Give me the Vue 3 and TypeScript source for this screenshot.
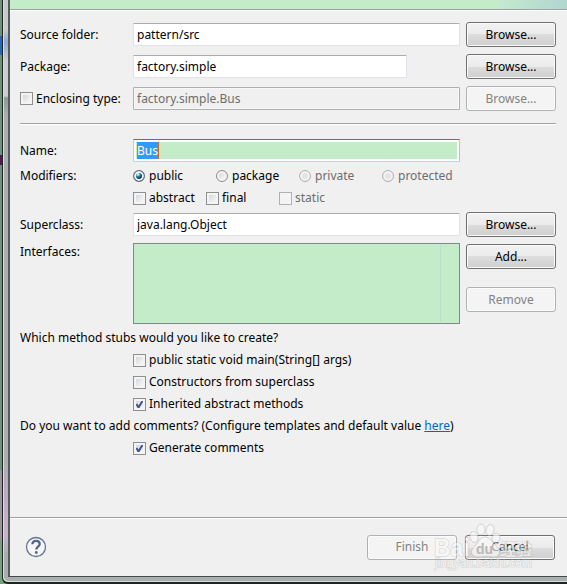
<script setup lang="ts">
import { onMounted, ref } from 'vue'

interface Option {
  id: string
  label: string
  disabled?: boolean
  checked?: boolean
}

const sourceFolder = ref('pattern/src')
const packageName = ref('factory.simple')
const enclosingType = ref('factory.simple.Bus')
const enclosing = ref(false)
const typeName = ref('Bus')
const superclass = ref('java.lang.Object')
const visibility = ref('public')
const nameInput = ref<HTMLInputElement | null>(null)

const visibilities: Option[] = [
  { id: 'public', label: 'public' },
  { id: 'package', label: 'package' },
  { id: 'private', label: 'private', disabled: true },
  { id: 'protected', label: 'protected', disabled: true },
]

const modifiers = ref<Option[]>([
  { id: 'abstract', label: 'abstract', checked: false },
  { id: 'final', label: 'final', checked: false },
  { id: 'static', label: 'static', checked: false, disabled: true },
])

const stubs = ref<Option[]>([
  { id: 'main', label: 'public static void main(String[] args)', checked: false },
  { id: 'constructors', label: 'Constructors from superclass', checked: false },
  { id: 'inherited', label: 'Inherited abstract methods', checked: true },
])

const generateComments = ref(true)

onMounted(() => {
  nameInput.value?.focus()
  nameInput.value?.select()
})
</script>

<template>
  <div class="desktop">
    <div class="frame">
      <main class="dialog">
        <div class="banner"></div>
        <form class="form" @submit.prevent>
          <section class="grid">
            <label for="source">Source folder:</label>
            <input id="source" v-model="sourceFolder" class="field" type="text" />
            <button type="button" class="btn">Browse...</button>

            <label for="package">Package:</label>
            <input id="package" v-model="packageName" class="field short" type="text" />
            <button type="button" class="btn">Browse...</button>

            <label class="option"><input v-model="enclosing" type="checkbox" class="check" />Enclosing type:</label>
            <input v-model="enclosingType" class="field" type="text" aria-label="Enclosing type" disabled />
            <button type="button" class="btn" disabled>Browse...</button>
          </section>

          <hr class="rule" />

          <section class="grid name-row">
            <label for="name">Name:</label>
            <input id="name" ref="nameInput" v-model="typeName" class="field active" type="text" />
          </section>

          <section class="grid modifiers">
            <span class="line">Modifiers:</span>
            <div class="modifier-options">
              <div class="radios" role="radiogroup" aria-label="Modifiers">
                <label v-for="v in visibilities" :key="v.id" class="option line" :class="{ off: v.disabled }">
                  <input v-model="visibility" type="radio" name="visibility" class="radio" :value="v.id" :disabled="v.disabled" />{{ v.label }}
                </label>
              </div>
              <div class="checks">
                <label v-for="m in modifiers" :key="m.id" class="option line" :class="{ off: m.disabled }">
                  <input v-model="m.checked" type="checkbox" class="check" :disabled="m.disabled" />{{ m.label }}
                </label>
              </div>
            </div>
          </section>

          <section class="grid">
            <label for="superclass">Superclass:</label>
            <input id="superclass" v-model="superclass" class="field" type="text" />
            <button type="button" class="btn">Browse...</button>
          </section>

          <section class="grid interfaces">
            <label for="interfaces" class="top">Interfaces:</label>
            <textarea id="interfaces" class="list" readonly></textarea>
            <div class="side">
              <button type="button" class="btn">Add...</button>
              <button type="button" class="btn" disabled>Remove</button>
            </div>
          </section>

          <section class="questions">
            <p class="line">Which method stubs would you like to create?</p>
            <label v-for="s in stubs" :key="s.id" class="option line indent">
              <input v-model="s.checked" type="checkbox" class="check" />{{ s.label }}
            </label>
            <p class="line">Do you want to add comments? (Configure templates and default value&nbsp;<a href="#">here</a>)</p>
            <label class="option line indent">
              <input v-model="generateComments" type="checkbox" class="check" />Generate comments
            </label>
          </section>
        </form>

        <footer class="footer">
          <button type="button" class="help" aria-label="Help">
            <svg viewBox="0 0 22 22" width="22" height="22" aria-hidden="true">
              <circle cx="11" cy="11" r="9.5" fill="#f4f6f9" stroke="#64748f" stroke-width="1.3" />
              <path d="M7.4 8.2C7.5 5.9 9 4.8 11 4.8c2.200 0 3.700 1.200 3.700 3.100 0 2.700-3.400 2.700-3.400 5.500" fill="none" stroke="#53668a" stroke-width="2.300" />
              <circle cx="11.300" cy="16.500" r="1.400" fill="#53668a" />
            </svg>
          </button>
          <button type="button" class="btn" disabled>Finish</button>
          <button type="button" class="btn">Cancel</button>
          <svg class="watermark" viewBox="0 0 110 50" width="110" height="50" aria-hidden="true">
            <g fill="#fafafa" stroke="#b0b0b0" stroke-width="0.7" opacity="0.65">
              <ellipse cx="43" cy="16" rx="4" ry="5.500" transform="rotate(-15 43 16)" />
              <ellipse cx="50" cy="8.500" rx="4" ry="5.500" />
              <ellipse cx="59" cy="9" rx="4" ry="5.500" transform="rotate(10 59 9)" />
              <ellipse cx="65" cy="17" rx="4" ry="5" transform="rotate(20 65 17)" />
              <path d="M54 16c-5 0-6 5-10 9-6 5-4 11 3 11 4 0 10-1 14 0 8 1 10-6 4-11-4-4-6-9-11-9z" />
            </g>
            <g class="wm-text">
              <text x="3" y="35" class="wm-logo">Bai</text>
              <text x="69" y="34" class="wm-cjk">经验</text>
              <text x="4" y="46" class="wm-url">jingyan.baidu.com</text>
            </g>
            <text x="45" y="33" class="wm-du">du</text>
          </svg>
        </footer>
      </main>
    </div>
  </div>
</template>

<style>
body {
  margin: 0;
}
</style>

<style scoped>
* {
  box-sizing: border-box;
}

.desktop {
  min-height: 100vh;
  display: flex;
  padding-left: 2px;
  background: linear-gradient(#6f9079 0 36px, #2867b5 36px 55px, #6f9079 55px 155px, #571355 155px 165px, #6f9079 165px 470px, #9c929e 470px 540px, #78a080 540px);
  color: #000;
  font: 12px/16px "Noto Sans", "Open Sans", sans-serif;
}

.frame {
  flex: 1;
  display: flex;
  padding: 0 0 5px 5px;
  border-left: 1px solid #1e2422;
  border-bottom: 2px solid #1e2422;
  border-bottom-left-radius: 6px;
  background: linear-gradient(#c5cccc 0 30px, #8fa8dc 42px, #c8cecf 60px 96px, #8d9997 98px, #a7b0ae 115px 460px, #bba9c4 490px, #c8b3cc 535px, #a7b0ae 555px);
  box-shadow: inset 1px -1px #d8e0de;
}

.dialog {
  flex: 1;
  display: flex;
  flex-direction: column;
  border-left: 2px solid #555b5a;
  border-bottom: 1px solid #454a49;
  background: #f0f0f0;
}

.banner {
  height: 11px;
  border-bottom: 1px solid #fff;
  background:
    linear-gradient(#9fa3a0, #9fa3a0) bottom / 100% 1px no-repeat,
    linear-gradient(115deg, transparent calc(100% - 65px), #c5e8cf calc(100% - 64px), #b0d6cf) #c5ecc9;
}

.form {
  flex: 1;
  padding: 11px 11px 0 10px;
}

.grid {
  display: grid;
  grid-template-columns: 107px minmax(0, 1fr) 90px;
  gap: 7px 6px;
  align-items: center;
}

.field {
  width: 100%;
  height: 23px;
  padding: 0 3px;
  border: 1px solid #e2e3ea;
  border-top-color: #abadb3;
  border-radius: 1px;
  background: #fff;
  color: #000;
  font: inherit;
  outline: none;
}

.short {
  width: calc(100% - 53px);
}

.field:disabled {
  border-color: #afafaf;
  box-shadow: inset 0 0 0 1px #f8f8f8;
  background: #f0f0f0;
  color: #6d6d6d;
}

.active {
  border-color: #3d7bad #a4c9e3 #b7d9ed #b5cfe7;
  box-shadow: inset 0 0 0 2px #fff;
  background: linear-gradient(#d0661a, #d0661a) 24px 50% / 1px 17px no-repeat #c5ecc9;
}

.field::selection {
  background: #39f;
  color: #fff;
}

.btn {
  width: 90px;
  height: 25px;
  padding: 0;
  border: 1px solid #707070;
  border-radius: 3px;
  background: linear-gradient(#f2f2f2, #ebebeb 50%, #dddddd 50%, #cfcfcf);
  box-shadow: inset 0 0 0 1px #fbfbfb;
  color: #000;
  font: inherit;
}

.btn:disabled {
  border-color: #adb2b5;
  background: #f4f4f4;
  color: #838383;
}

.rule {
  height: 2px;
  margin: 12px 0 14px;
  border: 0;
  border-top: 1px solid #a0a0a0;
  background: #fff;
}

.option {
  display: flex;
  align-items: center;
  gap: 3px;
  white-space: nowrap;
}

.off {
  color: #6d6d6d;
}

.line {
  height: 22px;
  margin: 0;
  line-height: 22px;
}

.check,
.radio {
  appearance: none;
  flex: none;
  width: 13px;
  height: 13px;
  margin: 0;
  border: 1px solid #8e8f8f;
  background: linear-gradient(135deg, #cbcfd5, #f6f6f6 80%);
  box-shadow: inset 0 0 0 2px #f4f4f4;
}

.check:checked {
  background:
    url("data:image/svg+xml,%3Csvg xmlns='http://www.w3.org/2000/svg' viewBox='0 0 11 11'%3E%3Cpath d='M2.500 5l2 3.500L8.500 2' fill='none' stroke='%233f5297' stroke-width='2'/%3E%3C/svg%3E") center / 11px 11px no-repeat,
    linear-gradient(135deg, #cbcfd5, #f6f6f6 80%);
}

.radio {
  width: 12px;
  height: 12px;
  margin-right: 1px;
  border-radius: 50%;
}

.radio:checked {
  border-color: #626a70;
  background: radial-gradient(circle at 40% 35%, #a8e4f7 0 1px, #2389b5 2px, #123a59 4px);
}

.check:disabled,
.radio:disabled {
  border-color: #b1b1b1;
  background: #f4f4f4;
}

.radio:disabled {
  background: #e4e4e4;
}

.modifiers {
  margin: 3px 0;
  align-items: start;
}

.modifier-options {
  grid-column: 2 / 4;
}

.radios {
  display: grid;
  grid-template-columns: repeat(4, 83px);
}

.checks {
  display: grid;
  grid-template-columns: repeat(3, 73px);
}

.interfaces {
  margin-top: 6px;
  align-items: start;
}

.top {
  padding-top: 1px;
}

.list {
  display: block;
  width: 100%;
  height: 81px;
  border: 1px solid #828790;
  border-radius: 0;
  background: linear-gradient(#b5dfd2, #b5dfd2) calc(100% - 18px) 1px / 1px 77px no-repeat #c5ecc9;
  resize: none;
  outline: none;
}

.side {
  display: grid;
  gap: 18px;
  padding-top: 1px;
}

.questions {
  margin-top: 3px;
}

.indent {
  padding-left: 113px;
}

a {
  color: #0066cc;
}

.footer {
  position: relative;
  display: flex;
  align-items: center;
  gap: 8px;
  height: 59px;
  padding: 0 12px 0 15px;
  border-top: 1px solid #a0a0a0;
  box-shadow: inset 0 1px #fff;
}

.help {
  display: flex;
  margin-right: auto;
  padding: 0;
  border: 0;
  background: none;
}

.watermark {
  position: absolute;
  right: 26px;
  top: 3px;
  pointer-events: none;
}

.wm-text {
  fill: #fafafa;
  stroke: #b0b0b0;
  stroke-width: 1px;
  paint-order: stroke;
  opacity: 0.55;
}

.wm-logo {
  font: bold 23px "Liberation Sans", sans-serif;
}

.wm-cjk {
  font: bold 16px "Noto Sans CJK SC", sans-serif;
}

.wm-url {
  font: 12px "Liberation Sans", sans-serif;
}

.wm-du {
  fill: #b8b8b8;
  font: bold 14px "Liberation Sans", sans-serif;
}
</style>
